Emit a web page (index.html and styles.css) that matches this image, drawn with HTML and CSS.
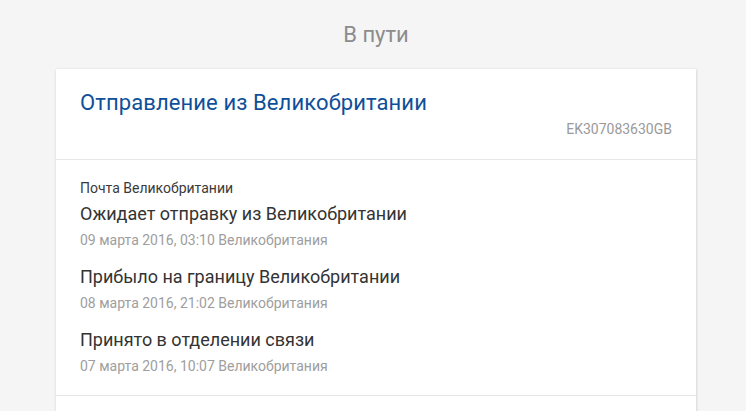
FILE: index.html
```html
<!DOCTYPE html>
<html lang="ru">
<head>
<meta charset="utf-8">
<title>В пути</title>
<link rel="stylesheet" href="styles.css">
</head>
<body>
<div class="page">
  <h1 class="status">В пути</h1>
  <div class="card">
    <div class="card-head">
      <div class="card-title">Отправление из Великобритании</div>
      <div class="track">EK307083630GB</div>
    </div>
    <div class="events">
      <div class="carrier">Почта Великобритании</div>
      <div class="event">
        <div class="event-title">Ожидает отправку из Великобритании</div>
        <div class="event-date">09 марта 2016, 03:10 Великобритания</div>
      </div>
      <div class="event">
        <div class="event-title">Прибыло на границу Великобритании</div>
        <div class="event-date">08 марта 2016, 21:02 Великобритания</div>
      </div>
      <div class="event">
        <div class="event-title">Принято в отделении связи</div>
        <div class="event-date">07 марта 2016, 10:07 Великобритания</div>
      </div>
    </div>
    <div class="more"></div>
  </div>
</div>
</body>
</html>
```
FILE: styles.css
```css
html, body {
  margin: 0;
  padding: 0;
  background: #f5f5f5;
  font-family: Roboto, "Noto Sans", sans-serif;
  overflow: hidden;
}
.page {
  width: 640px;
  margin-left: 56px;
  padding-top: 22px;
}
.status {
  margin: 0;
  font-size: 22px;
  line-height: 26px;
  font-weight: 400;
  color: #8c8c8c;
  text-align: center;
  height: 47px;
}
.card {
  background: #fff;
  box-shadow: 0 1px 3px rgba(0, 0, 0, 0.12), 1px 0 2px rgba(0, 0, 0, 0.06);
}
.card-head {
  padding: 21px 24px 22px 24px;
  border-bottom: 1px solid #e6e6e6;
}
.card-title {
  font-size: 22px;
  line-height: 26px;
  color: #0f4f99;
  letter-spacing: 0.1px;
}
.track {
  margin-top: 5px;
  text-align: right;
  font-size: 14px;
  line-height: 16px;
  color: #9a9a9a;
}
.events {
  padding: 20px 24px 21px 24px;
  border-bottom: 1px solid #e6e6e6;
  display: flex;
  flex-direction: column;
  gap: 18px;
}
.carrier {
  font-size: 14px;
  line-height: 16px;
  color: #3a3a3a;
  margin-bottom: -11px;
}
.event {
  display: flex;
  flex-direction: column;
  gap: 7px;
}
.event-title {
  font-size: 18px;
  line-height: 22px;
  color: #333;
}
.event-date {
  font-size: 14px;
  line-height: 16px;
  color: #9e9e9e;
}
.more {
  height: 60px;
}
```
